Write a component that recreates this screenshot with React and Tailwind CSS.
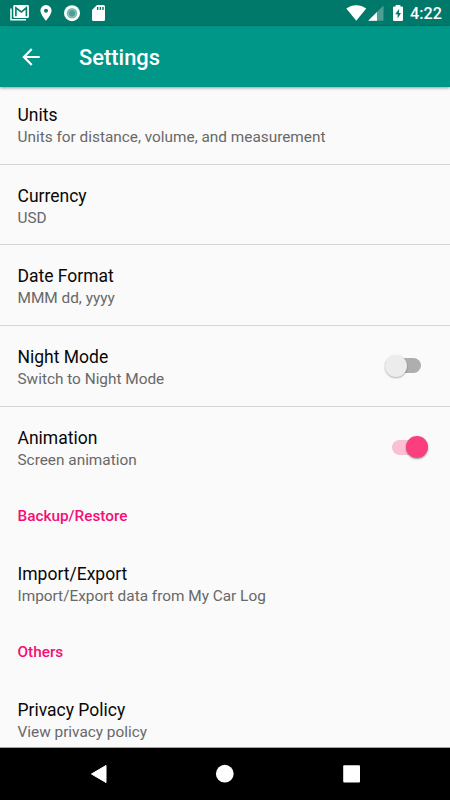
function StatusBar() {
  return (
    <div className="flex h-[26px] shrink-0 items-center bg-[#00796b] text-white">
      <svg className="w-[120px] h-[26px] shrink-0" viewBox="0 0 120 26" fill="none">
        <path d="M11 8.5V19.7H26" stroke="#fff" strokeWidth="1.5" />
        <rect x="13.3" y="5" width="15.6" height="13" rx="1.2" fill="#fff" />
        <path d="M15.9 16.2V7.8L21.3 12L26.4 7.8V16.2" stroke="#00796b" strokeWidth="1.6" />
        <path fillRule="evenodd" d="M46 5a5.6 5.6 0 0 0-5.6 5.6C40.4 14.7 46 20.8 46 20.8s5.6-6.1 5.6-10.2A5.6 5.6 0 0 0 46 5zm0 3.7a2 2 0 1 1 0 4 2 2 0 0 1 0-4z" fill="#fff" />
        <circle cx="72" cy="13.2" r="8" fill="#fff" />
        <circle cx="72" cy="13.2" r="5.3" fill="#80bcb5" />
        <circle cx="72" cy="13.2" r="3" fill="#4d9f95" />
        <path d="M97 5h6.5a1.5 1.5 0 0 1 1.5 1.5v13a1.5 1.5 0 0 1-1.5 1.5h-10a1.5 1.5 0 0 1-1.5-1.5V10z" fill="#fff" />
        <path d="M97.7 7v3M100.4 7v3M103 7v3" stroke="#00796b" strokeWidth="1.4" />
      </svg>
      <div className="flex-1" />
      <svg className="w-[80px] h-[26px] shrink-0" viewBox="330 0 80 26" fill="none">
        <path d="M346.3 8.5C352 4 360.5 4 366.2 8.5L356.3 20.8z" fill="#fff" />
        <path d="M383.5 5.5V20.8H368.2z" fill="#4d9f95" />
        <path d="M377 12V20.8H368.2z" fill="#fff" />
        <path d="M395.7 5h4.6v1.5h1.5a1.2 1.2 0 0 1 1.2 1.2v12a1.2 1.2 0 0 1-1.2 1.2h-7.6a1.2 1.2 0 0 1-1.2-1.2v-12a1.2 1.2 0 0 1 1.2-1.2h1.5z" fill="#fff" />
        <path d="M399.2 8.7L395.2 14.3H397.6V18.6L401 12.9H398.9z" fill="#00796b" />
      </svg>
      <span className="w-[40px] pt-[3px] text-[16.2px] font-medium leading-none">4:22</span>
    </div>
  );
}

function Switch({ on }) {
  return on ? (
    <div className="mr-[22px] mt-px flex h-[15px] w-[36px] items-center justify-end rounded-full bg-[#fcbfd5]">
      <div className="size-[22px] shrink-0 rounded-full bg-[#fb3f7e] shadow-[0_1px_2px_rgba(0,0,0,0.4)]" />
    </div>
  ) : (
    <div className="mr-[29.5px] flex h-[15px] w-[36px] items-center rounded-full bg-[#aeaeae]">
      <div className="size-[22px] shrink-0 rounded-full bg-[#ececec] shadow-[0_1px_2px_rgba(0,0,0,0.3)]" />
    </div>
  );
}

function Row({ title, detail, divider, children }) {
  return (
    <div
      className={`flex h-[80.67px] shrink-0 items-center justify-between border-b pl-[17.5px] ${divider ? "border-[#d6d6d6]" : "border-transparent"}`}
    >
      <div className="pt-[4px]">
        <div className="text-[17.5px] leading-[22px] text-[#080808]">{title}</div>
        <div className="text-[15.37px] leading-[22px] text-[#686868]">{detail}</div>
      </div>
      {children}
    </div>
  );
}

function SectionHeader({ children }) {
  return (
    <div className="flex h-[55.6px] shrink-0 items-center pl-[17.5px] pt-[3px] text-[15.33px] font-medium text-[#f50e76]">
      {children}
    </div>
  );
}

export default function App() {
  return (
    <div className="flex h-[800px] w-[450px] flex-col overflow-hidden bg-[#fafafa] font-['Roboto',sans-serif]">
      <StatusBar />
      <header className="z-10 flex h-[61px] shrink-0 items-center bg-[#009688] pl-[18px] text-white shadow-[0_1px_3px_rgba(0,0,0,0.4)]">
        <svg className="h-[26px] w-[26px]" viewBox="0 0 24 24" fill="#fff">
          <path d="M20 11H7.83l5.59-5.59L12 4l-8 8 8 8 1.41-1.41L7.83 13H20v-2z" />
        </svg>
        <h1 className="ml-[35px] pt-[2px] text-[21.9px] font-medium leading-none">Settings</h1>
      </header>
      <main className="flex min-h-0 flex-1 flex-col overflow-hidden">
        <div className="-mt-[2.9px] flex flex-col">
          <Row title="Units" detail="Units for distance, volume, and measurement" divider />
          <Row title="Currency" detail="USD" divider />
          <Row title="Date Format" detail="MMM dd, yyyy" divider />
          <Row title="Night Mode" detail="Switch to Night Mode" divider>
            <Switch on={false} />
          </Row>
          <Row title="Animation" detail="Screen animation">
            <Switch on />
          </Row>
          <SectionHeader>Backup/Restore</SectionHeader>
          <Row title="Import/Export" detail="Import/Export data from My Car Log" />
          <SectionHeader>Others</SectionHeader>
          <Row title="Privacy Policy" detail="View privacy policy" />
        </div>
      </main>
      <nav className="h-[53px] shrink-0 border-t border-[#a5a5a5] bg-black">
        <svg className="block h-[52px] w-[450px]" viewBox="0 748 450 52" fill="#fff">
          <path d="M91.5 774L106 765.5V782.5z" stroke="#fff" strokeWidth="1" strokeLinejoin="round" />
          <circle cx="224.8" cy="773.7" r="8.9" />
          <rect x="343.2" y="765.2" width="16.8" height="17.2" rx="1" />
        </svg>
      </nav>
    </div>
  );
}
